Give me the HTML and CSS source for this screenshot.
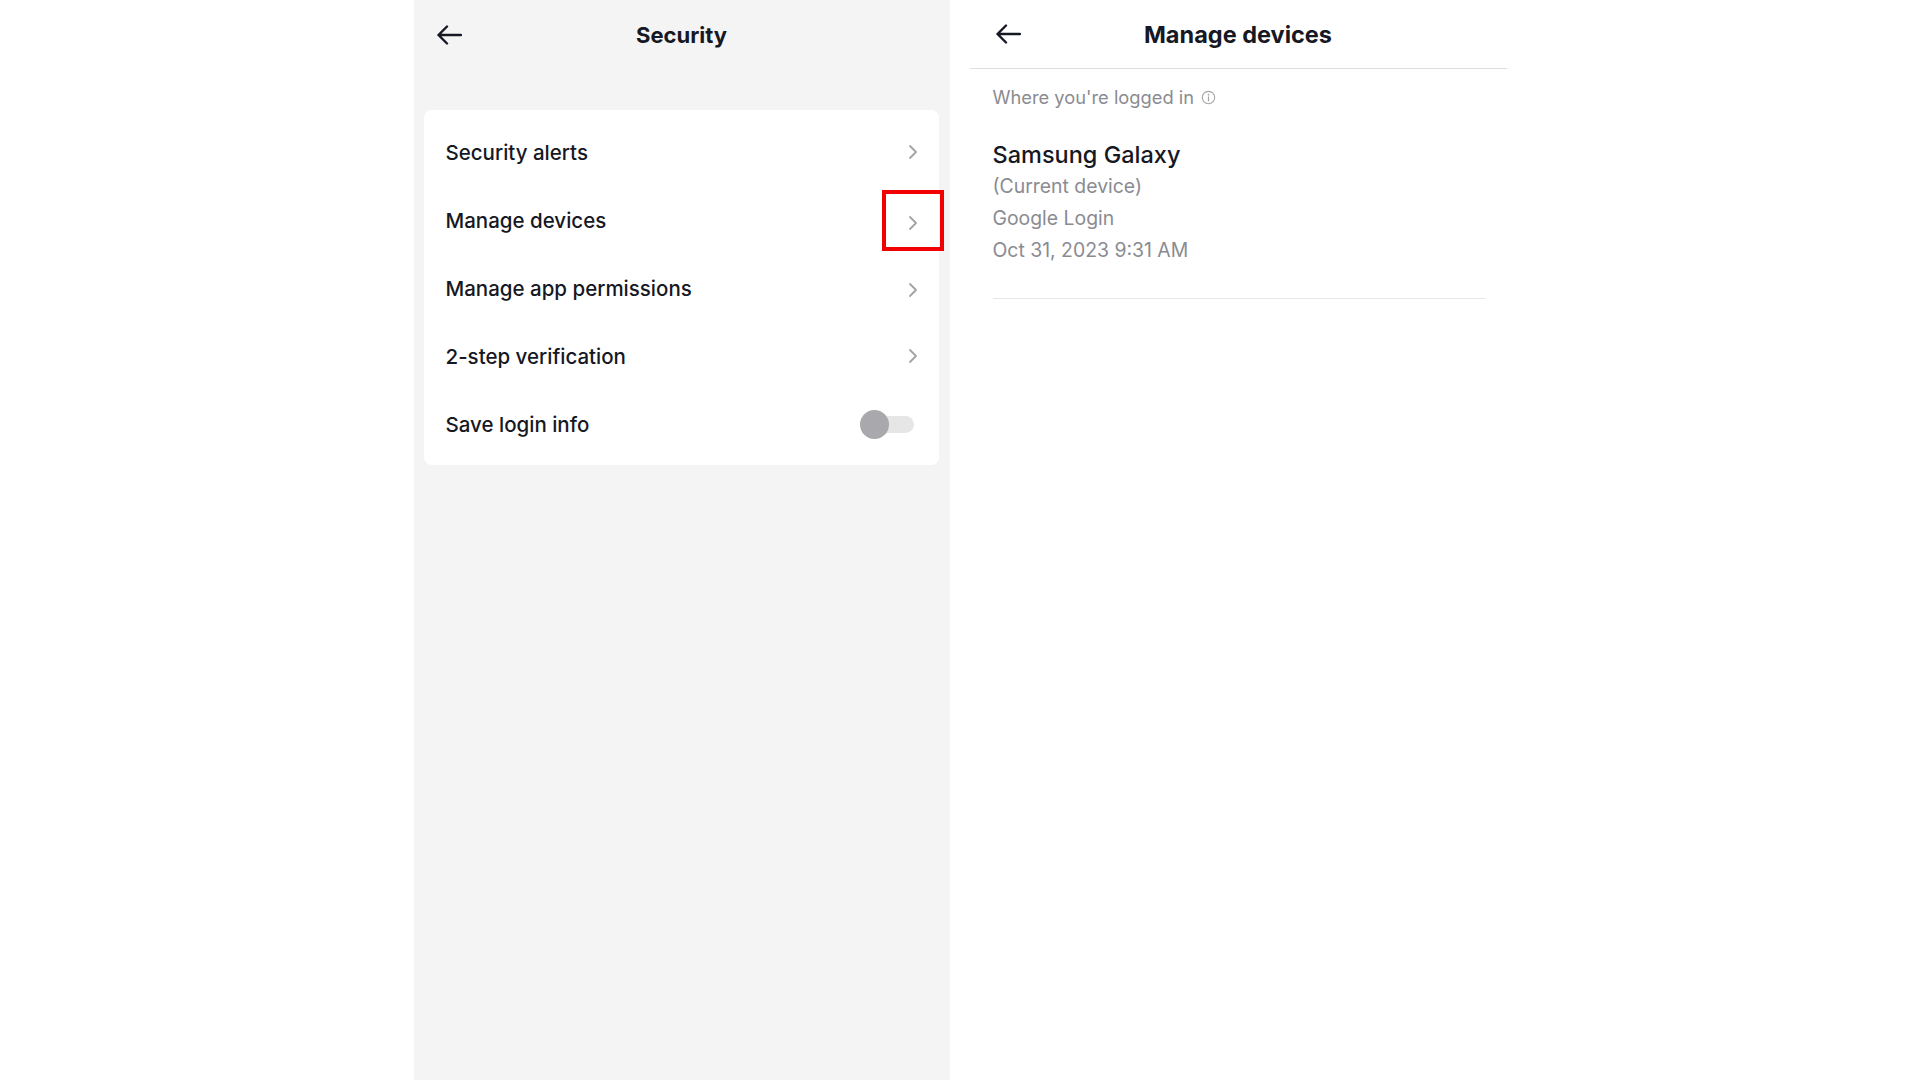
FILE: index.html
```html
<!DOCTYPE html>
<html lang="en">
<head>
<meta charset="utf-8">
<title>Security / Manage devices</title>
<link rel="stylesheet" href="styles.css">
</head>
<body>
<div class="page">
  <section class="panel panel-left">
    <header class="topbar">
      <span class="back">
        <svg width="26" height="20" viewBox="0 0 26 20"><path d="M25 10H2.5M11 1.5L2.5 10L11 18.5" fill="none" stroke="#161823" stroke-width="2.4" stroke-linecap="round" stroke-linejoin="round"/></svg>
      </span>
      <h1 class="title title-sm">Security</h1>
    </header>
    <div class="card">
      <div class="row"><span class="label">Security alerts</span><span class="chev"><svg width="10" height="16" viewBox="0 0 10 16"><path d="M2 2l6 6-6 6" fill="none" stroke="#a3a3a6" stroke-width="1.8" stroke-linecap="round" stroke-linejoin="round"/></svg></span></div>
      <div class="row"><span class="label">Manage devices</span><span class="chev chev-mark"><svg width="10" height="16" viewBox="0 0 10 16"><path d="M2 2l6 6-6 6" fill="none" stroke="#a3a3a6" stroke-width="1.8" stroke-linecap="round" stroke-linejoin="round"/></svg><span class="highlight"></span></span></div>
      <div class="row"><span class="label">Manage app permissions</span><span class="chev"><svg width="10" height="16" viewBox="0 0 10 16"><path d="M2 2l6 6-6 6" fill="none" stroke="#a3a3a6" stroke-width="1.8" stroke-linecap="round" stroke-linejoin="round"/></svg></span></div>
      <div class="row"><span class="label">2-step verification</span><span class="chev"><svg width="10" height="16" viewBox="0 0 10 16"><path d="M2 2l6 6-6 6" fill="none" stroke="#a3a3a6" stroke-width="1.8" stroke-linecap="round" stroke-linejoin="round"/></svg></span></div>
      <div class="row"><span class="label">Save login info</span><span class="toggle"><span class="knob"></span></span></div>
    </div>
  </section>

  <section class="panel panel-right">
    <header class="topbar topbar-line">
      <span class="back">
        <svg width="26" height="20" viewBox="0 0 26 20"><path d="M25 10H2.5M11 1.5L2.5 10L11 18.5" fill="none" stroke="#161823" stroke-width="2.4" stroke-linecap="round" stroke-linejoin="round"/></svg>
      </span>
      <h1 class="title title-lg">Manage devices</h1>
    </header>
    <div class="content">
      <p class="section-label">Where you're logged in
        <svg class="info" width="15" height="15" viewBox="0 0 16 16"><circle cx="8" cy="8" r="6.6" fill="none" stroke="#a5a5a8" stroke-width="1.2"/><circle cx="8" cy="5" r="0.9" fill="#a5a5a8"/><path d="M8 7.2V11.5" stroke="#a5a5a8" stroke-width="1.3" stroke-linecap="round"/></svg>
      </p>
      <div class="device">
        <div class="device-name">Samsung Galaxy</div>
        <div class="device-line">(Current device)</div>
        <div class="device-line">Google Login</div>
        <div class="device-line">Oct 31, 2023 9:31 AM</div>
      </div>
    </div>
  </section>
</div>
</body>
</html>
```

FILE: styles.css
```css
* { box-sizing: border-box; }

html, body {
  margin: 0;
  padding: 0;
  background: #ffffff;
}

body {
  font-family: Inter, "Noto Sans", "Liberation Sans", sans-serif;
  color: #161823;
}

.page {
  display: flex;
  justify-content: center;
  gap: 20px;
  height: 1080px;
  overflow: hidden;
}

.panel {
  height: 1080px;
}

.panel-left {
  width: 536px;
  background: #f4f4f4;
  padding: 0 11px 0 10px;
}

.panel-right {
  width: 537px;
  background: #ffffff;
}

.topbar {
  position: relative;
  height: 68px;
  display: flex;
  align-items: center;
  justify-content: center;
}

.panel-left .topbar {
  margin: 0 -11px 0 -10px;
  height: 70px;
}

.topbar-line {
  border-bottom: 1px solid #dedede;
  height: 69px;
}

.back {
  position: absolute;
  left: 22px;
  top: 50%;
  margin-top: -10px;
  width: 26px;
  height: 20px;
  display: flex;
}

.panel-right .back {
  left: 25px;
  margin-top: -10px;
}

.title {
  margin: 0;
  font-weight: 700;
  color: #161823;
}

.title-sm {
  font-size: 22px;
}

.title-lg {
  font-size: 23.5px;
}

.card {
  margin-top: 40px;
  background: #ffffff;
  border-radius: 8px;
  padding: 8px 0 7px;
}

.row {
  height: 68px;
  display: flex;
  align-items: center;
  justify-content: space-between;
  padding: 0 21px 0 22px;
}

.label {
  font-size: 20.5px;
  font-weight: 500;
  color: #161823;
}

.chev {
  position: relative;
  width: 10px;
  height: 16px;
  display: flex;
}

.chev-mark { top: 3px; }

.row:nth-child(3) .chev { top: 2px; }

.highlight {
  position: absolute;
  left: -26px;
  top: -25px;
  width: 62px;
  height: 61px;
  border: 4px solid #f20000;
}

.toggle {
  position: relative;
  width: 42px;
  height: 17px;
  margin-right: 4px;
  border-radius: 9px;
  background: #e6e6e6;
}

.knob {
  position: absolute;
  left: -12px;
  top: -6px;
  width: 29px;
  height: 29px;
  border-radius: 50%;
  background: #a9a9ad;
}

.content {
  padding: 0 22px 0 23px;
}

.section-label {
  margin: 16px 0 0;
  font-size: 18.3px;
  line-height: 24px;
  color: #8a8b91;
  display: flex;
  align-items: center;
  gap: 7px;
}

.info { margin-top: 1px; }

.device {
  margin-top: 31px;
  padding-bottom: 32px;
  border-bottom: 1px solid #e6e6e6;
}

.device-name {
  font-size: 23.5px;
  line-height: 30px;
  font-weight: 500;
  color: #161823;
}

.device-line {
  font-size: 19.4px;
  line-height: 32px;
  color: #8a8b91;
}
```
